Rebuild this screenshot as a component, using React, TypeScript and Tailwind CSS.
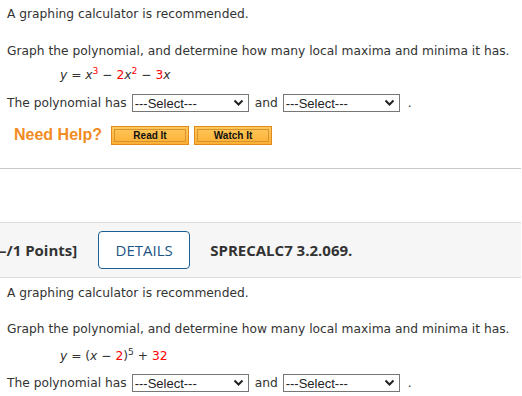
import React from 'react'

const body = { fontFamily: '"DejaVu Sans", Verdana, sans-serif' }
const arial = { fontFamily: '"Liberation Sans", Arial, sans-serif' }
const open = { fontFamily: '"Open Sans", sans-serif' }

function Select() {
  return (
    <span
      className="inline-flex items-center justify-between w-[117px] h-[18px] border border-[#767676] bg-white pl-[2px] pr-[4px] text-[13px] text-[#222] align-middle"
      style={arial}
    >
      <span className="leading-none">---Select---</span>
      <svg width="11" height="8" viewBox="0 0 11 8">
        <path d="M1.5 1.5 L5.5 5.5 L9.5 1.5" fill="none" stroke="#222" strokeWidth="2" />
      </svg>
    </span>
  )
}

function Answer() {
  return (
    <div className="flex items-center h-[18px] text-[12.25px] text-[#333]" style={body}>
      <span>The polynomial has</span>
      <span className="ml-[5px]"><Select /></span>
      <span className="ml-[6px]">and</span>
      <span className="ml-[5px]"><Select /></span>
      <span className="ml-[8px]">.</span>
    </div>
  )
}

function HelpButton({ label }: { label: string }) {
  return (
    <span className="inline-flex items-center justify-center w-[78px] h-[19px] border border-[#e08a1e] bg-gradient-to-b from-[#fec85a] to-[#fbb034] p-[2px]">
      <span
        className="flex items-center justify-center w-full h-full border border-[#d9912e] text-[10px] font-bold text-[#111]"
        style={arial}
      >
        {label}
      </span>
    </span>
  )
}

const red = 'text-[#ff0000]'

export default function App() {
  return (
    <div className="w-[522px] h-[396px] overflow-hidden bg-white text-[#333]" style={body}>
      <div className="pl-[7px] pt-[6px] text-[12.25px]">
        <div className="h-[17px] leading-[17px]">A graphing calculator is recommended.</div>
        <div className="mt-[20px] h-[17px] leading-[17px]">
          Graph the polynomial, and determine how many local maxima and minima it has.
        </div>
        <div className="mt-[7px] pl-[53px] h-[17px] leading-[17px]">
          <i>y</i> = <i>x</i>
          <sup className={red}>3</sup> − <span className={red}>2</span>
          <i>x</i>
          <sup className={red}>2</sup> − <span className={red}>3</span>
          <i>x</i>
        </div>
        <div className="mt-[10px]">
          <Answer />
        </div>
        <div className="mt-[11px] flex items-center pl-[7px]">
          <span className="text-[16px] font-bold text-[#f28b22]" style={arial}>
            Need Help?
          </span>
          <span className="ml-[9px]"><HelpButton label="Read It" /></span>
          <span className="ml-[5px]"><HelpButton label="Watch It" /></span>
        </div>
      </div>

      <div className="mt-[21px] w-[521px] border-t border-[#c8c8c8]" />

      <div className="mt-[53px] w-[521px] h-[56px] border-y border-[#dcdcdc] bg-[#f6f6f6] flex items-center" style={open}>
        <span className="ml-[-6px] text-[15px] font-bold text-[#333]">[–/1 Points]</span>
        <span className="ml-[21px] flex items-center justify-center w-[92px] h-[38px] rounded-[4px] border border-[#1a5f96] bg-white text-[15px] text-[#1d5585]">
          DETAILS
        </span>
        <span className="ml-[20px] text-[15px] font-bold text-[#333]">SPRECALC7 3.2.069.</span>
      </div>

      <div className="pl-[7px] pt-[7px] text-[12.25px]">
        <div className="h-[17px] leading-[17px]">A graphing calculator is recommended.</div>
        <div className="mt-[19px] h-[17px] leading-[17px]">
          Graph the polynomial, and determine how many local maxima and minima it has.
        </div>
        <div className="mt-[10px] pl-[53px] h-[17px] leading-[17px]">
          <i>y</i> = (<i>x</i> − <span className={red}>2</span>)<sup>5</sup> +{' '}
          <span className={red}>32</span>
        </div>
        <div className="mt-[9px]">
          <Answer />
        </div>
      </div>
    </div>
  )
}
